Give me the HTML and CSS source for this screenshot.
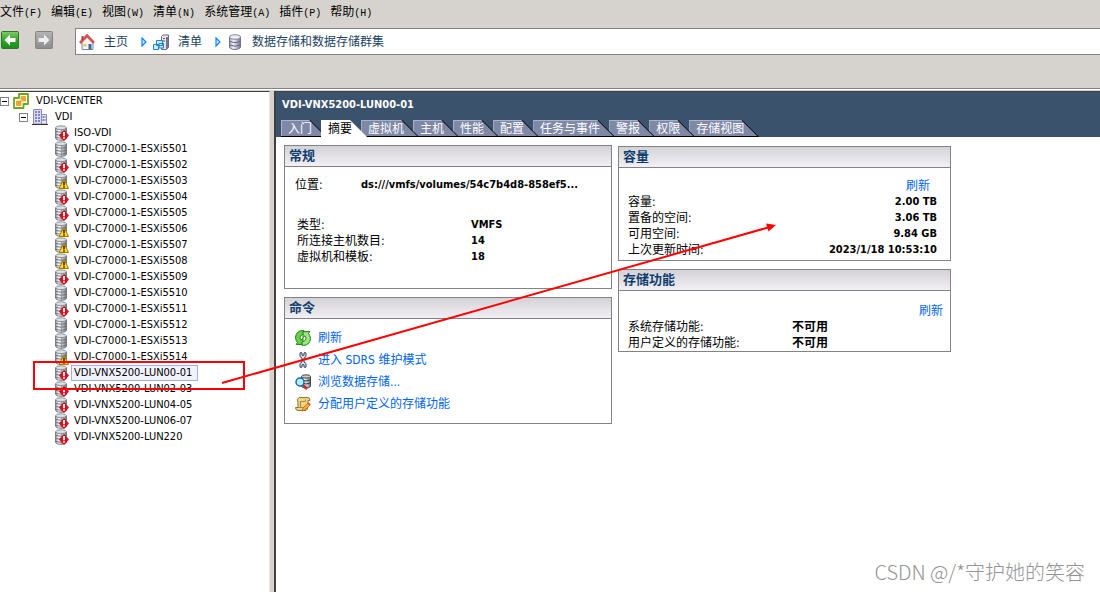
FILE: index.html
```html
<!DOCTYPE html>
<html lang="zh-CN">
<head>
<meta charset="utf-8">
<title>VDI-VNX5200-LUN00-01</title>
<link rel="stylesheet" href="styles.css">
</head>
<body>
<svg class="sprite" aria-hidden="true">
  <defs>
    <linearGradient id="steel"><stop offset="0" stop-color="#8b8f95"/><stop offset=".3" stop-color="#ffffff"/><stop offset=".55" stop-color="#d3d6d9"/><stop offset="1" stop-color="#6e737a"/></linearGradient>
    <linearGradient id="violet"><stop offset="0" stop-color="#a09fb4"/><stop offset=".35" stop-color="#f6f6fa"/><stop offset="1" stop-color="#77768f"/></linearGradient>
    <linearGradient id="green" x2="0" y2="1"><stop offset="0" stop-color="#7fce69"/><stop offset=".5" stop-color="#35a32c"/><stop offset="1" stop-color="#149018"/></linearGradient>
    <linearGradient id="grey" x2="0" y2="1"><stop offset="0" stop-color="#b4b4b4"/><stop offset="1" stop-color="#8c8c8c"/></linearGradient>
  </defs>
  <symbol id="i-db" viewBox="0 0 16 16">
    <path d="M2.500 3v10.500c1 1.300 3 1.800 5.500 1.800s4.500-.5 5.500-1.800V3z" fill="url(#steel)" stroke="#777c83"/>
    <ellipse cx="8" cy="2.700" rx="5.300" ry="1.900" fill="#dfe1e3" stroke="#8b8f95"/>
    <path d="M3 6.500q5 1.500 10 0M3 9.500q5 1.500 10 0M3 12.500q5 1.500 10 0" fill="none" stroke="#666b73" stroke-width=".9"/>
    <path d="M8.500 5v10" stroke="#8b9097" stroke-width=".8"/>
  </symbol>
  <symbol id="i-alert" viewBox="0 0 16 16">
    <use href="#i-db"/>
    <path d="M11 5.500l4.700 5-4.700 5-4.700-5z" fill="#e6081e" stroke="#b00012" stroke-width=".7"/>
    <path d="M11 7v4.200M11 12.200v1.600" stroke="#fff" stroke-width="1.800"/>
  </symbol>
  <symbol id="i-warn" viewBox="0 0 16 16">
    <use href="#i-db"/>
    <path d="M11 6l4.600 9.500H6z" fill="#ffdb1f" stroke="#a87b00" stroke-linejoin="round"/>
    <path d="M11 8.500v4M11 13.300v1.500" stroke="#222" stroke-width="1.500"/>
  </symbol>
  <symbol id="i-dbv" viewBox="0 0 16 16">
    <path d="M2.500 3v10c0 1 2 2.500 5.500 2.500s5.500-1.500 5.500-2.500V3z" fill="url(#violet)" stroke="#74738c"/>
    <ellipse cx="8" cy="3" rx="5.500" ry="2.300" fill="#eeeef4" stroke="#8685a0"/>
    <path d="M3 7.500q5 2.500 10 0M3 11q5 2.500 10 0" fill="none" stroke="#62617b"/>
  </symbol>
  <symbol id="i-vc" viewBox="0 0 16 16">
    <path d="M6 1h9v10h-4.500v4H1V5h5z" fill="#fff" stroke="#6aa51c" stroke-width="1.800" stroke-linejoin="round"/>
    <path d="M8 3.500h4.500V8H8zM3.500 8H8v4.500H3.500z" fill="#f5a81c" stroke="#d58a0c" stroke-width=".6"/>
    <path d="M6 6h2v2h2v2.500H8.500" fill="none" stroke="#c6ddb0"/>
  </symbol>
  <symbol id="i-dc" viewBox="0 0 16 16">
    <path d="M1.500 15V.5h8V15z" fill="#dcdcf3" stroke="#8c8ca6"/>
    <path d="M9.500 15V5.500h5V15z" fill="#ececf8" stroke="#8c8ca6"/>
    <path d="M3 3h5M3 6h5M3 9h5M3 12h5M10.500 8H14M10.500 11H14" stroke="#8080d0" stroke-width="2" stroke-dasharray="2 1"/>
    <path d="M0 15.500h16" stroke="#333344"/>
  </symbol>
  <symbol id="i-home" viewBox="0 0 16 16">
    <path d="M3 8v7.500h11V8L8.500 3z" fill="#f2f4f8" stroke="#7d8ba1"/>
    <path d="M1 9L8 1.500 15 9" fill="none" stroke="#d9534f" stroke-width="2.600"/>
    <path d="M3.500 2v4" stroke="#b33e3e" stroke-width="2"/>
    <path d="M9.500 10h3v5.500h-3z" fill="#38699f"/>
    <path d="M4.500 10h3v2.500h-3z" fill="#f0c94b"/>
  </symbol>
  <symbol id="i-inv" viewBox="0 0 16 16">
    <path d="M8.500 2.500L10 1h5.500v12.500l-2 2h-5z" fill="#e5e5eb" stroke="#6c6a7d"/>
    <path d="M14 3v12" stroke="#777589" stroke-width="2"/>
    <path d="M10 4.500h2M10 7h2" stroke="#57556b"/>
    <path d="M3.500 6.500h6v5h-6zM.5 10.500h5v5h-5zM6 9.500h4.500v4.500H6z" fill="#c9eafc" fill-opacity=".85" stroke="#1c83ca"/>
  </symbol>
  <symbol id="i-refresh" viewBox="0 0 16 16">
    <path id="half" d="M9 .8C4.500-.2.600 3 .6 7.500c0 2 .8 3.800 2 5l-1.400 1.900H8V8.300L6 10.200C4.500 8.500 4.500 5 9 4z" fill="#69d343" stroke="#197a1b"/>
    <path d="M7 15.200c4.500 1 8.400-2.200 8.400-6.700 0-2-.8-3.800-2-5l1.400-1.900H8v6.100l2-1.900c1.500 1.700 1.500 5.200-3 6.200z" fill="#a0e67d" stroke="#197a1b"/>
  </symbol>
  <symbol id="i-wrench" viewBox="0 0 16 16">
    <path d="M5 .8v3.700L7 6v4l-2 1.500v3.700h2v-2.500h2v2.500h2v-3.700L9 10V6l2-1.500V.8H9v2.500H7V.8z" fill="#dce3ec" stroke="#35455d" stroke-width="1"/>
  </symbol>
  <symbol id="i-browse" viewBox="0 0 16 16">
    <path d="M6.500 2.500v10c2 2 7 2 9 0v-10z" fill="url(#steel)" stroke="#444"/>
    <ellipse cx="11" cy="2.500" rx="4.500" ry="1.700" fill="#ccc" stroke="#444"/>
    <path d="M7 6q4 2 8 0M7 9q4 2 8 0" fill="none" stroke="#333"/>
    <path d="M8 11l4 4" stroke="#c92b20" stroke-width="2.600"/>
    <circle cx="5" cy="8" r="4" fill="#b8ecff" stroke="#116fa9" stroke-width="1.500"/>
  </symbol>
  <symbol id="i-assign" viewBox="0 0 16 16">
    <path d="M4 1.500h9q2 0 2 3h-2v6q0 3-2 4H3q-2.500 0-2.500-3H3V6Q1 4 4 1.500z" fill="#edd68a" stroke="#917332"/>
    <path d="M5.500 11.500v-6h5V3.500M3 11.500h5" fill="none" stroke="#a98a45"/>
    <path d="M7 15l1-3 5-5 2 2-5 5z" fill="#ffae28" stroke="#b56313" stroke-width=".8"/>
    <path d="M12.500 7.500l2 2 1.300-1.300-2-2z" fill="#dc5545"/>
  </symbol>
  <symbol id="i-back" viewBox="0 0 18 18">
    <rect x=".5" y=".5" width="17" height="17" rx="1" fill="url(#green)" stroke="#2a7a28"/>
    <path d="M3.500 9L9 3.500V7h5.500v4H9v3.500z" fill="#fff"/>
  </symbol>
  <symbol id="i-fwd" viewBox="0 0 18 18">
    <rect x=".5" y=".5" width="17" height="17" rx="1" fill="url(#grey)" stroke="#858585"/>
    <path d="M14.500 9L9 3.500V7H3.500v4H9v3.500z" fill="#eee"/>
  </symbol>
  <symbol id="i-sep" viewBox="0 0 6 10">
    <path d="M1 1l4 4-4 4z" fill="#d4ecff" stroke="#0a84ff" stroke-width="1.200"/>
  </symbol>
</svg>

<div class="app">
  <nav class="menubar">
    <button>文件<span>(F)</span></button>
    <button>编辑<span>(E)</span></button>
    <button>视图<span>(W)</span></button>
    <button>清单<span>(N)</span></button>
    <button>系统管理<span>(A)</span></button>
    <button>插件<span>(P)</span></button>
    <button>帮助<span>(H)</span></button>
  </nav>

  <div class="toolbar">
    <button class="nav-btn" aria-label="后退"><svg><use href="#i-back"/></svg></button>
    <button class="nav-btn" aria-label="前进"><svg><use href="#i-fwd"/></svg></button>
    <nav class="crumbs">
      <a href="#"><svg class="icon"><use href="#i-home"/></svg>主页</a>
      <svg class="sep"><use href="#i-sep"/></svg>
      <a href="#"><svg class="icon"><use href="#i-inv"/></svg>清单</a>
      <svg class="sep"><use href="#i-sep"/></svg>
      <a href="#"><svg class="icon"><use href="#i-dbv"/></svg>数据存储和数据存储群集</a>
    </nav>
  </div>

  <div class="workspace">
    <aside class="tree">
      <div class="node"><button class="toggle" aria-label="折叠"></button><svg class="icon"><use href="#i-vc"/></svg><span class="label">VDI-VCENTER</span></div>
      <div class="node level-1"><button class="toggle" aria-label="折叠"></button><svg class="icon"><use href="#i-dc"/></svg><span class="label">VDI</span></div>
      <ul class="stores">
        <li class="node"><svg class="icon"><use href="#i-alert"/></svg><span class="label">ISO-VDI</span></li>
        <li class="node"><svg class="icon"><use href="#i-db"/></svg><span class="label">VDI-C7000-1-ESXi5501</span></li>
        <li class="node"><svg class="icon"><use href="#i-alert"/></svg><span class="label">VDI-C7000-1-ESXi5502</span></li>
        <li class="node"><svg class="icon"><use href="#i-warn"/></svg><span class="label">VDI-C7000-1-ESXi5503</span></li>
        <li class="node"><svg class="icon"><use href="#i-alert"/></svg><span class="label">VDI-C7000-1-ESXi5504</span></li>
        <li class="node"><svg class="icon"><use href="#i-alert"/></svg><span class="label">VDI-C7000-1-ESXi5505</span></li>
        <li class="node"><svg class="icon"><use href="#i-warn"/></svg><span class="label">VDI-C7000-1-ESXi5506</span></li>
        <li class="node"><svg class="icon"><use href="#i-warn"/></svg><span class="label">VDI-C7000-1-ESXi5507</span></li>
        <li class="node"><svg class="icon"><use href="#i-warn"/></svg><span class="label">VDI-C7000-1-ESXi5508</span></li>
        <li class="node"><svg class="icon"><use href="#i-alert"/></svg><span class="label">VDI-C7000-1-ESXi5509</span></li>
        <li class="node"><svg class="icon"><use href="#i-db"/></svg><span class="label">VDI-C7000-1-ESXi5510</span></li>
        <li class="node"><svg class="icon"><use href="#i-alert"/></svg><span class="label">VDI-C7000-1-ESXi5511</span></li>
        <li class="node"><svg class="icon"><use href="#i-db"/></svg><span class="label">VDI-C7000-1-ESXi5512</span></li>
        <li class="node"><svg class="icon"><use href="#i-db"/></svg><span class="label">VDI-C7000-1-ESXi5513</span></li>
        <li class="node"><svg class="icon"><use href="#i-warn"/></svg><span class="label">VDI-C7000-1-ESXi5514</span></li>
        <li class="node"><svg class="icon"><use href="#i-alert"/></svg><span class="label selected">VDI-VNX5200-LUN00-01</span></li>
        <li class="node"><svg class="icon"><use href="#i-alert"/></svg><span class="label">VDI-VNX5200-LUN02-03</span></li>
        <li class="node"><svg class="icon"><use href="#i-alert"/></svg><span class="label">VDI-VNX5200-LUN04-05</span></li>
        <li class="node"><svg class="icon"><use href="#i-alert"/></svg><span class="label">VDI-VNX5200-LUN06-07</span></li>
        <li class="node"><svg class="icon"><use href="#i-alert"/></svg><span class="label">VDI-VNX5200-LUN220</span></li>
      </ul>
    </aside>

    <main class="detail">
      <header class="detail-head">
        <h1>VDI-VNX5200-LUN00-01</h1>
        <div class="tabs">
          <button class="tab"><span>入门</span></button>
          <button class="tab active"><span>摘要</span></button>
          <button class="tab"><span>虚拟机</span></button>
          <button class="tab"><span>主机</span></button>
          <button class="tab"><span>性能</span></button>
          <button class="tab"><span>配置</span></button>
          <button class="tab"><span>任务与事件</span></button>
          <button class="tab"><span>警报</span></button>
          <button class="tab"><span>权限</span></button>
          <button class="tab"><span>存储视图</span></button>
        </div>
      </header>

      <div class="columns">
        <div class="column left">
          <section class="panel">
            <h2>常规</h2>
            <div class="general">
              <dl class="props location"><dt>位置:</dt><dd>ds:///vmfs/volumes/54c7b4d8-858ef5...</dd></dl>
              <dl class="props facts">
                <dt>类型:</dt><dd>VMFS</dd>
                <dt>所连接主机数目:</dt><dd>14</dd>
                <dt>虚拟机和模板:</dt><dd>18</dd>
              </dl>
            </div>
          </section>
          <section class="panel">
            <h2>命令</h2>
            <div class="commands">
              <a href="#"><svg class="icon"><use href="#i-refresh"/></svg>刷新</a>
              <a href="#"><svg class="icon"><use href="#i-wrench"/></svg>进入 SDRS 维护模式</a>
              <a href="#"><svg class="icon"><use href="#i-browse"/></svg>浏览数据存储...</a>
              <a href="#"><svg class="icon"><use href="#i-assign"/></svg>分配用户定义的存储功能</a>
            </div>
          </section>
        </div>
        <div class="column right">
          <section class="panel">
            <h2>容量</h2>
            <div class="capacity">
              <a href="#">刷新</a>
              <dl class="props">
                <dt>容量:</dt><dd>2.00 TB</dd>
                <dt>置备的空间:</dt><dd>3.06 TB</dd>
                <dt>可用空间:</dt><dd>9.84 GB</dd>
                <dt>上次更新时间:</dt><dd>2023/1/18 10:53:10</dd>
              </dl>
            </div>
          </section>
          <section class="panel">
            <h2>存储功能</h2>
            <div class="storage">
              <a href="#">刷新</a>
              <dl class="props">
                <dt>系统存储功能:</dt><dd>不可用</dd>
                <dt>用户定义的存储功能:</dt><dd>不可用</dd>
              </dl>
            </div>
          </section>
        </div>
      </div>
    </main>
  </div>

  <svg class="markup" width="800" height="420" aria-hidden="true">
    <rect x="34" y="362" width="210" height="27" fill="none" stroke="#f00" stroke-width="2"/>
    <path d="M222 383L768 227.500" stroke="#f00" stroke-width="2"/>
    <path d="M776 225l-7.500 6.500-2.500-8z" fill="#f00"/>
  </svg>
  <div class="watermark">CSDN @/*守护她的笑容</div>
</div>
</body>
</html>
```

FILE: styles.css
```css
* { box-sizing: border-box; }

body {
  margin: 0;
  background: #d6d3ce;
  color: #000;
  font: 12px/16px "DejaVu Sans Condensed", "Noto Sans CJK SC", sans-serif;
}

h1, h2, dl, dd, ul { margin: 0; padding: 0; }
ul { list-style: none; }
a { color: #0064f0; text-decoration: none; }
button { border: 0; padding: 0; background: none; color: inherit; font: inherit; }
svg { display: block; flex: none; }
.icon { width: 16px; height: 16px; }
.sprite { position: absolute; width: 0; height: 0; }

.app {
  position: relative;
  display: flex;
  flex-direction: column;
  min-height: 100vh;
  overflow: hidden;
}

/* Menu and toolbar */
.menubar { display: flex; align-items: flex-start; gap: 9px; height: 24px; padding-top: 3px; }
.menubar button { white-space: nowrap; font-family: "Noto Sans CJK SC", sans-serif; }
.menubar span { font: 10px/16px "Liberation Mono", monospace; }

.toolbar {
  display: flex;
  align-items: flex-start;
  gap: 16px;
  height: 64px;
  padding: 4px 0 0 1px;
}
.nav-btn { margin-top: 3px; }
.nav-btn svg { width: 18px; height: 18px; }
.crumbs {
  flex: 1;
  display: flex;
  align-items: center;
  height: 27px;
  margin-left: 6px;
  padding-left: 3px;
  border: 1px solid #848284;
  border-right: 0;
  background: #fff;
}
.crumbs a { display: flex; align-items: center; gap: 9px; color: #21415f; }
.sep { width: 6px; height: 10px; margin: 0 6px 0 13px; }

/* Split view */
.workspace {
  flex: 1;
  display: flex;
  gap: 4px;
  border-top: 1px solid #848284;
  box-shadow: inset 0 1px #fff;
  padding-top: 2px;
}
.tree {
  flex: 0 0 270px;
  padding-top: 1px;
  background: #fff;
  border-top: 1px solid #424142;
  border-right: 1px solid #e8e6e2;
  font-size: 11px;
}
.node { display: flex; align-items: center; gap: 4px; height: 16px; }
.level-1 { padding-left: 19px; }
.stores { padding-left: 53px; }
.stores .node { gap: 2px; }
.label {
  height: 16px;
  padding: 0 5px 0 2px;
  border: 1px solid transparent;
  line-height: 14px;
  white-space: nowrap;
}
.label.selected { background: #f2f2fd; border-color: #9ab5d8; }
.toggle {
  width: 9px;
  height: 9px;
  border: 1px solid #848284;
  background: linear-gradient(#000, #000) center / 5px 1px no-repeat #fff;
}

.detail {
  flex: 1;
  min-width: 0;
  border: solid #424142;
  border-width: 1px 0 0 2px;
  background: #fff;
}
.detail-head { padding-top: 5px; background: #3b526d; color: #fff; }
.detail-head h1 { padding-left: 6px; font-size: 11px; line-height: 16px; }
.tabs { display: flex; margin-top: 7px; padding-left: 5px; }

/* Each tab overlaps the one after it with its slanted edge */
.tab {
  position: relative;
  height: 17px;
  margin-right: -6px;
  padding: 0 15px 0 7px;
  background: #000;
  clip-path: polygon(0 0, calc(100% - 17px) 0, 100% 100%, 0 100%);
  line-height: 16px;
  white-space: nowrap;
}
.tab::before {
  content: "";
  position: absolute;
  inset: 0 2px 1px 0;
  border: solid #a9b3cc;
  border-width: 1px 0 0 1px;
  background: #7f89a7;
  clip-path: polygon(0 0, calc(100% - 16px) 0, 100% 100%, 0 100%);
}
.tab span { position: relative; }
.tab:nth-child(1) { z-index: 10; }
.tab:nth-child(3) { z-index: 8; }
.tab:nth-child(4) { z-index: 7; }
.tab:nth-child(5) { z-index: 6; }
.tab:nth-child(6) { z-index: 5; }
.tab:nth-child(7) { z-index: 4; }
.tab:nth-child(8) { z-index: 3; }
.tab:nth-child(9) { z-index: 2; }
.tab.active { z-index: 11; background: #fff; color: #000; }
.tab.active::before { background: #fff; border-color: #fff; }

/* Panels */
.columns { display: flex; align-items: flex-start; gap: 6px; padding: 8px; }
.column { display: flex; flex-direction: column; gap: 8px; min-width: 0; }
.left { flex: 0 1 328px; }
.right { flex: 0 1 333px; padding-top: 1px; }
.panel { border: 1px solid #848284; background: #fff; }
.panel h2 {
  padding: 2px 4px;
  border-bottom: 1px solid #848284;
  background: linear-gradient(#d3d2d6, #f2f0f5);
  color: #103f6e;
  font-size: 13px;
  line-height: 16px;
}
.props { display: grid; line-height: 16px; }
.props dd { font-size: 11px; font-weight: bold; white-space: nowrap; }
.general { padding: 10px 10px 23px; }
.location { grid-template-columns: 66px 1fr; }
.facts { grid-template-columns: 174px 1fr; margin-top: 24px; padding-left: 2px; }
.commands {
  display: flex;
  flex-direction: column;
  align-items: flex-start;
  gap: 6px;
  padding: 11px 10px;
}
.commands a { display: flex; gap: 7px; }
.capacity, .storage { display: flex; flex-direction: column; padding-left: 9px; }
.capacity > a, .storage > a { align-self: flex-end; }
.capacity { padding-top: 10px; padding-right: 13px; padding-bottom: 2px; }
.capacity > a { margin-right: 7px; }
.capacity .props { grid-template-columns: auto 1fr; }
.capacity dd { text-align: right; }
.storage { padding-top: 12px; padding-right: 7px; }
.storage .props { grid-template-columns: 164px 1fr; }
.storage dd { font-size: 12px; }

/* Annotations lying over the window */
.markup { position: absolute; left: 0; top: 0; z-index: 20; pointer-events: none; }
.watermark {
  position: absolute;
  right: 15px;
  bottom: 6px;
  color: #949494;
  font: 300 20px/28px "Noto Sans CJK SC", sans-serif;
}
```
